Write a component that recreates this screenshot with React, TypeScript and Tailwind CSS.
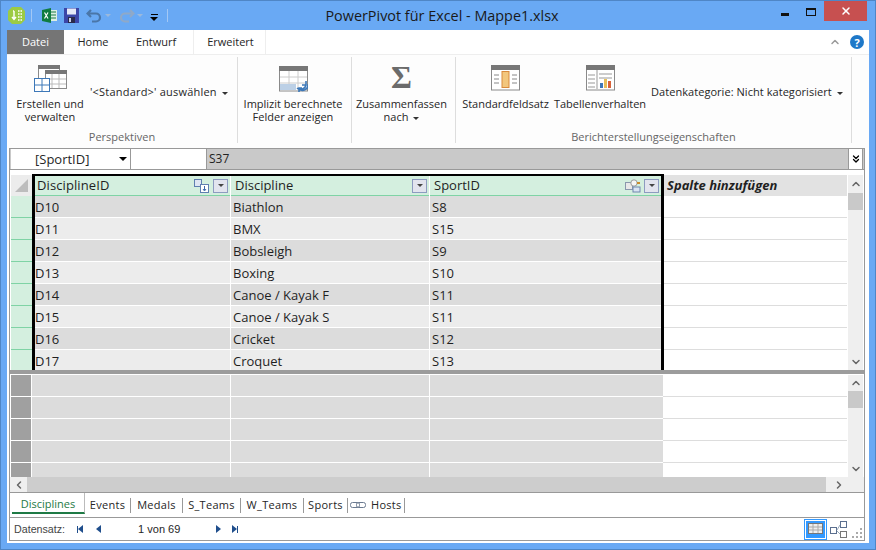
import { ChevronDown, ChevronUp, ChevronLeft, ChevronRight, ChevronsDown, X } from "lucide-react";

const ui = { fontFamily: '"Open Sans", "Noto Sans", sans-serif' };
const arial = { fontFamily: '"Liberation Sans", sans-serif' };

const rows = [
  ["D10", "Biathlon", "S8"],
  ["D11", "BMX", "S15"],
  ["D12", "Bobsleigh", "S9"],
  ["D13", "Boxing", "S10"],
  ["D14", "Canoe / Kayak F", "S11"],
  ["D15", "Canoe / Kayak S", "S11"],
  ["D16", "Cricket", "S12"],
  ["D17", "Croquet", "S13"],
];

const sheets = [
  { name: "Events", width: 46 },
  { name: "Medals", width: 52 },
  { name: "S_Teams", width: 58 },
  { name: "W_Teams", width: 63 },
  { name: "Sports", width: 44 },
];

function Caret() {
  return <span className="ml-[5px] inline-block h-0 w-0 border-x-[3px] border-t-[3px] border-x-transparent border-t-[#333] align-middle" />;
}

function GridIcon({ children }: { children?: React.ReactNode }) {
  return (
    <svg width="29" height="26" viewBox="0 0 29 26">
      <rect x="0.5" y="0.5" width="28" height="24.5" fill="#fff" stroke="#8a8a8a" />
      <rect x="0" y="0" width="29" height="5" fill="#777" />
      {children}
    </svg>
  );
}

function FilterButton() {
  return (
    <span className="flex h-[14px] w-[15px] items-center justify-center border border-[#8d9bc0] bg-[#e2e4ee]">
      <span className="h-0 w-0 border-x-[3px] border-t-[3px] border-x-transparent border-t-[#444]" />
    </span>
  );
}

function KeyIcon() {
  return (
    <svg width="16" height="14" viewBox="0 0 16 14">
      <rect x="0.5" y="0.5" width="7" height="7" fill="#dfe6f3" stroke="#5f7fb0" />
      <rect x="6.5" y="5.5" width="8" height="8" fill="#fff" stroke="#5f7fb0" />
      <path d="M10.5 7v4M9 10l1.5 2 1.5-2" stroke="#3a66a8" fill="none" />
    </svg>
  );
}

function LinkIcon() {
  return (
    <svg width="16" height="14" viewBox="0 0 16 14">
      <rect x="0.5" y="3.5" width="7" height="7" fill="#e8e8e8" stroke="#8a97ac" />
      <circle cx="9" cy="4" r="3.2" fill="#f5f5f5" stroke="#9a9a9a" />
      <rect x="8" y="8" width="7" height="5" fill="#d9e3f2" stroke="#6f87ad" />
      <path d="M12 4h3" stroke="#c98a2e" strokeWidth="2" />
    </svg>
  );
}

function Scrollbar({ top }: { top: number }) {
  return (
    <div className="flex w-[15px] shrink-0 flex-col items-center bg-[#efefef]">
      <div className="flex w-full items-center justify-center" style={{ height: top }}>
        <ChevronUp size={12} strokeWidth={3} className="text-[#666]" />
      </div>
      <div className="h-[17px] w-full bg-[#c9c9c9]" />
      <div className="flex-1" />
      <div className="flex h-[16px] w-full items-center justify-center">
        <ChevronDown size={12} strokeWidth={3} className="text-[#666]" />
      </div>
    </div>
  );
}

export default function App() {
  return (
    <div className="flex h-[550px] w-[876px] flex-col overflow-hidden border border-[#4f86c6] bg-[#69a9f4] text-[#262626]" style={ui}>
      {/* Title bar */}
      <div className="flex h-[29px] shrink-0 items-start">
        <div className="flex w-[188px] items-center pl-[7px] pt-[6px]">
          <svg width="17" height="17" viewBox="0 0 17 17">
            <path d="M4 0h9l4 4v9l-4 4H4L0 13V4z" fill="#9ccb45" />
            <path d="M6 4v8M4 10l2 2.5 2-2.5M6 4h-1" stroke="#fff" strokeWidth="1.4" fill="none" />
            <path d="M10 4h4M10 7h4M10 10h4M10 13h4" stroke="#fff" strokeWidth="1.5" strokeDasharray="1.5 1" />
          </svg>
          <span className="ml-[6px] h-[13px] w-px bg-[#a3c8f5]" />
          <svg className="ml-[10px]" width="15" height="15" viewBox="0 0 15 15">
            <rect x="7" y="2" width="8" height="11" fill="#dcefe3" />
            <path d="M9 4h5M9 7h5M9 10h5" stroke="#1d7a45" />
            <path d="M0 2l9-2v15l-9-2z" fill="#107c41" />
            <path d="M2.5 4.5l3.5 6M6 4.5l-3.5 6" stroke="#fff" strokeWidth="1.2" />
          </svg>
          <svg className="ml-[7px]" width="15" height="15" viewBox="0 0 15 15">
            <rect width="15" height="15" fill="#3b46a8" />
            <rect x="3" y="0.5" width="9" height="6" fill="#e5e9f8" />
            <rect x="4" y="9" width="7" height="6" fill="#2a2a4a" />
            <rect x="5" y="10" width="2" height="4" fill="#c9d0e8" />
          </svg>
          <svg className="ml-[7px]" width="17" height="14" viewBox="0 0 17 14">
            <path d="M5 1L1.5 4.5 5 8M2 4.5h8a4 4 0 0 1 0 8H6" stroke="#4a76a8" strokeWidth="2.2" fill="none" />
          </svg>
          <span className="ml-[2px] h-0 w-0 border-x-[3px] border-t-[3px] border-x-transparent border-t-[#9bb9dc]" />
          <svg className="ml-[7px]" width="17" height="14" viewBox="0 0 17 14">
            <path d="M12 1l3.5 3.5L12 8M15 4.5H7a4 4 0 0 0 0 8h4" stroke="#8fa9c8" strokeWidth="2.2" fill="none" />
          </svg>
          <span className="ml-[2px] h-0 w-0 border-x-[3px] border-t-[3px] border-x-transparent border-t-[#9bb9dc]" />
          <span className="ml-[7px] flex flex-col items-center gap-[2px] pt-[3px]">
            <span className="h-px w-[7px] bg-black" />
            <span className="h-0 w-0 border-x-[4px] border-t-[4px] border-x-transparent border-t-black" />
          </span>
          <span className="ml-[9px] h-[13px] w-px bg-[#a3c8f5]" />
        </div>
        <div className="flex-1 pt-[4px] text-center text-[14.4px] leading-[22px] text-[#1a1a1a]">PowerPivot für Excel - Mappe1.xlsx</div>
        <div className="flex w-[180px] items-start justify-end pr-[8px]">
          <div className="flex h-[20px] w-[27px] items-end justify-center pb-[5px]"><span className="h-[3px] w-[8px] bg-[#111]" /></div>
          <div className="flex h-[20px] w-[26px] items-center justify-center pt-[2px]"><span className="h-[8px] w-[10px] border border-t-2 border-[#111]" /></div>
          <div className="flex h-[20px] w-[43px] items-center justify-center bg-[#c75050]"><X size={12} strokeWidth={3} className="text-white" /></div>
        </div>
      </div>

      {/* Window body */}
      <div className="mx-[6px] mb-[6px] flex min-h-0 flex-1 flex-col bg-white">
        {/* Ribbon tabs */}
        <div className="flex h-[24px] shrink-0 items-stretch text-[11px]">
          <div className="flex w-[57px] items-center justify-center bg-[#757575] text-white">Datei</div>
          <div className="flex w-[58px] items-center justify-center">Home</div>
          <div className="flex w-[71px] items-center justify-center pr-[3px]">Entwurf</div>
          <div className="flex w-[73px] items-center justify-center border-x border-[#eee] pl-[2px]">Erweitert</div>
          <div className="flex flex-1 items-center justify-end gap-[9px] pr-[5px]">
            <ChevronUp size={12} strokeWidth={3} className="text-[#9a9a9a]" />
            <span className="flex h-[14px] w-[14px] items-center justify-center rounded-full bg-[#1e78c8] text-[11px] font-bold leading-none text-white">?</span>
          </div>
        </div>

        {/* Ribbon */}
        <div className="flex h-[94px] shrink-0 border-t border-[#eee] bg-[#fdfdfd] pb-[5px] pt-[2px] text-[11px] leading-[13px]">
          <div className="flex w-[231px] flex-col border-r border-[#ddd]">
            <div className="flex flex-1">
              <div className="flex w-[83px] flex-col items-center pl-[3px] pt-[8px]">
                <svg width="33" height="28" viewBox="0 0 33 28">
                  <rect x="4.5" y="0.5" width="21" height="16" fill="#fff" stroke="#8a8a8a" />
                  <rect x="4" y="0" width="22" height="4" fill="#777" />
                  <rect x="11.5" y="5.5" width="21" height="18" fill="#fff" stroke="#8a8a8a" />
                  <rect x="11" y="5" width="22" height="4" fill="#777" />
                  <path d="M18 9v14M25 9v14M12 14h20M12 19h20" stroke="#bbb" />
                  <rect x="0.5" y="13.5" width="15" height="13" fill="#fff" stroke="#3d78b8" />
                  <path d="M8 14v12M1 20h14" stroke="#3d78b8" />
                </svg>
                <div className="mt-[4px] whitespace-nowrap text-center">Erstellen und<br />verwalten</div>
              </div>
              <div className="whitespace-nowrap pt-[28px] tracking-[0.2px]">'&lt;Standard&gt;' auswählen<Caret /></div>
            </div>
            <div className="text-center text-[#666]">Perspektiven</div>
          </div>

          <div className="flex w-[114px] flex-col items-center border-r border-[#ddd] pr-[3px] pt-[9px]">
            <GridIcon>
              <path d="M10 5v19M19 5v19M1 11h27M1 17h27" stroke="#ccc" />
              <rect x="1" y="18" width="16" height="6" fill="#bcd0e6" />
              <path d="M18 22a5.5 5.5 0 0 0 9-3M27 15v4h-4M29 18a5.5 5.5 0 0 1-9 5M20 26v-4h3" stroke="#3d78b8" strokeWidth="1.6" fill="none" />
            </GridIcon>
            <div className="mt-[5px] whitespace-nowrap text-center">Implizit berechnete<br />Felder anzeigen</div>
          </div>

          <div className="flex w-[104px] flex-col items-center border-r border-[#ddd] pr-[4px] pt-[4px]">
            <div className="h-[32px] text-[32px] font-bold leading-[32px] text-[#6b6b6b]" style={{ fontFamily: '"Liberation Serif", serif' }}>Σ</div>
            <div className="mt-[4px] whitespace-nowrap text-center">Zusammenfassen<br />nach<Caret /></div>
          </div>

          <div className="mr-[17px] flex flex-1 flex-col border-r border-[#ddd]">
            <div className="flex flex-1">
              <div className="flex w-[99px] flex-col items-center pt-[8px]">
                <GridIcon>
                  <path d="M3 10h5M3 14h5M3 18h5M21 10h5M21 14h5M21 18h5" stroke="#888" />
                  <rect x="11" y="6.5" width="7" height="16" fill="#f2c67d" stroke="#d98a3c" />
                </GridIcon>
                <div className="mt-[6px] whitespace-nowrap">Standardfeldsatz</div>
              </div>
              <div className="flex w-[90px] flex-col items-center pt-[8px]">
                <GridIcon>
                  <path d="M11 5v19M2 10h7M2 14h7M2 18h7M2 22h7M13 9h13M13 13h13" stroke="#999" />
                  <rect x="14" y="18" width="3" height="5" fill="#3d78b8" />
                  <rect x="18" y="14" width="3" height="9" fill="#e8bf5a" />
                  <rect x="22" y="16" width="3" height="7" fill="#d9623a" />
                </GridIcon>
                <div className="mt-[6px] whitespace-nowrap">Tabellenverhalten</div>
              </div>
              <div className="whitespace-nowrap pl-[6px] pt-[28px] tracking-[0.05px]">Datenkategorie: Nicht kategorisiert<Caret /></div>
            </div>
            <div className="text-center text-[#666]">Berichterstellungseigenschaften</div>
          </div>
        </div>

        {/* Work area */}
        <div className="ml-[2px] mr-[4px] flex flex-1 flex-col border-x border-[#999]">
          {/* Formula bar */}
          <div className="flex h-[22px] shrink-0 border-y border-[#999] bg-[#c9c9c9] pl-px pr-px text-[12px] leading-[20px]">
            <div className="flex w-[120px] items-center border-r border-[#999] bg-white pl-[24px] text-[13px]">
              <span className="flex-1">[SportID]</span>
              <span className="mr-[3px] h-0 w-0 border-x-[4px] border-t-[4px] border-x-transparent border-t-black" />
            </div>
            <div className="w-[76px] border-r border-[#999] bg-white" />
            <div className="flex-1 pl-[2px] text-[#222]">S37</div>
            <div className="flex w-[15px] items-center justify-center border-x border-[#999] bg-white"><ChevronsDown size={12} strokeWidth={2.6} className="text-black" /></div>
          </div>

          {/* Upper pane */}
          <div className="flex h-[200px] shrink-0 overflow-hidden pl-px pr-px text-[13px] text-[#1f1f1f]">
            <div className="w-[21px] shrink-0 pt-[5px]">
              <div className="flex h-[21px] items-center justify-center bg-[#ececec]">
                <span className="h-0 w-0 border-b-[13px] border-l-[13px] border-b-[#bdbdbd] border-l-transparent" />
              </div>
              {rows.map((r) => (
                <div key={r[0]} className="h-[22px] border-b border-[#7fd3a5] bg-[#d4efdf]" />
              ))}
            </div>
            <div className="mt-[4px] flex w-[632px] shrink-0 flex-col overflow-hidden border-x-[3px] border-t-[2px] border-black">
              <div className="grid h-[20px] shrink-0 grid-cols-[196px_199px_1fr] border-b border-[#7fd3a5] bg-[#d4efdf]">
                <div className="flex items-center border-r border-white px-[2px]">
                  <span className="flex-1 tracking-[0.1px]">DisciplineID</span>
                  <KeyIcon />
                  <span className="ml-[3px]"><FilterButton /></span>
                </div>
                <div className="flex items-center border-r border-white pl-[4px] pr-[2px]">
                  <span className="flex-1">Discipline</span>
                  <FilterButton />
                </div>
                <div className="flex items-center pl-[4px] pr-[2px]">
                  <span className="flex-1">SportID</span>
                  <LinkIcon />
                  <span className="ml-[3px]"><FilterButton /></span>
                </div>
              </div>
              {rows.map((r, i) => (
                <div key={r[0]} className={`grid h-[22px] shrink-0 grid-cols-[196px_199px_1fr] border-b border-white ${i % 2 === 0 ? "bg-[#dcdcdc]" : "bg-[#ececec]"}`}>
                  <div className="h-full border-r border-white leading-[23px]">{r[0]}</div>
                  <div className="h-full border-r border-white pl-[2px] leading-[23px]">{r[1]}</div>
                  <div className="h-full pl-[2px] leading-[23px]">{r[2]}</div>
                </div>
              ))}
            </div>
            <div className="flex-1 pr-px pt-[5px]">
              <div className="h-[21px] bg-[#e2e2e2] pl-[3px] font-bold italic leading-[21px]">Spalte hinzufügen</div>
              {rows.map((r) => (
                <div key={r[0]} className="h-[22px] border-b border-[#ddd] bg-white" />
              ))}
            </div>
            <div className="flex pt-[5px]"><Scrollbar top={18} /></div>
          </div>

          {/* Splitter */}
          <div className="h-[4px] shrink-0 bg-[#9c9c9c]" />

          {/* Lower pane */}
          <div className="flex h-[103px] shrink-0 overflow-hidden pl-px pr-px pt-px">
            <div className="w-[21px] shrink-0">
              {[0, 1, 2, 3, 4].map((i) => (
                <div key={i} className="h-[22px] border-b border-r border-white bg-[#a0a0a0]" />
              ))}
            </div>
            <div className="w-[631px] shrink-0">
              {[0, 1, 2, 3, 4].map((i) => (
                <div key={i} className="grid h-[22px] grid-cols-[199px_199px_1fr] border-b border-white bg-[#dcdcdc]">
                  <div className="border-r border-white" />
                  <div className="border-r border-white" />
                  <div />
                </div>
              ))}
            </div>
            <div className="flex-1 pr-px">
              {[0, 1, 2, 3, 4].map((i) => (
                <div key={i} className="h-[22px] border-b border-[#ddd]" />
              ))}
            </div>
            <Scrollbar top={16} />
          </div>

          {/* Horizontal scrollbar */}
          <div className="flex h-[16px] shrink-0 items-center border-b border-[#999] bg-[#efefef]">
            <div className="flex w-[17px] justify-center"><ChevronLeft size={12} strokeWidth={3} className="text-[#666]" /></div>
            <div className="h-full w-[799px] bg-[#cdcdcd]" />
            <ChevronRight size={12} strokeWidth={3} className="ml-[7px] text-[#666]" />
          </div>

          {/* Sheet tabs */}
          <div className="flex h-[25px] shrink-0 items-center border-b border-[#999] pl-[2px] text-[11px] tracking-[0.3px]">
            <div className="flex h-[21px] w-[73px] items-center justify-center self-start border-b-2 border-r border-b-[#1e7a45] border-r-[#bbb] pt-[3px] font-medium tracking-normal text-[#1e7a45]">Disciplines</div>
            {sheets.map((s) => (
              <div key={s.name} className="flex h-[15px] items-center justify-center border-r border-[#999]" style={{ width: s.width }}>{s.name}</div>
            ))}
            <div className="flex h-[15px] w-[57px] items-center border-r border-[#999] pl-[2px]">
              <svg width="16" height="8" viewBox="0 0 16 8" className="mr-[5px]">
                <rect x="0.5" y="1.5" width="9" height="5" rx="2" fill="none" stroke="#6b7a90" />
                <rect x="6.5" y="1.5" width="9" height="5" rx="2" fill="none" stroke="#6b7a90" />
              </svg>
              Hosts
            </div>
          </div>

          {/* Status bar */}
          <div className="flex h-[23px] shrink-0 items-center border-b border-[#999] pl-[4px] text-[11px]">
            <span className="text-[10.7px] text-[#444]" style={arial}>Datensatz:</span>
            <span className="ml-[12px] flex items-center">
              <span className="h-[7px] w-px bg-[#1f4e8c]" />
              <span className="h-0 w-0 border-y-[4px] border-r-[5px] border-y-transparent border-r-[#1f4e8c]" />
            </span>
            <span className="ml-[13px] h-0 w-0 border-y-[4px] border-r-[5px] border-y-transparent border-r-[#1f4e8c]" />
            <span className="ml-[37px] w-[78px] text-[11px]" style={arial}>1 von 69</span>
            <span className="h-0 w-0 border-y-[4px] border-l-[5px] border-y-transparent border-l-[#1f4e8c]" />
            <span className="ml-[11px] flex items-center">
              <span className="h-0 w-0 border-y-[4px] border-l-[5px] border-y-transparent border-l-[#1f4e8c]" />
              <span className="h-[7px] w-px bg-[#1f4e8c]" />
            </span>
            <div className="flex-1" />
            <div className="flex h-[21px] w-[23px] items-center justify-center self-end border border-[#3399ff] bg-[#3399ff] shadow-[inset_0_0_0_1px_#fff]">
              <svg width="15" height="13" viewBox="0 0 15 13">
                <rect x="0.5" y="0.5" width="14" height="10" fill="#eee" stroke="#777" />
                <path d="M5 1v9M10 1v9M1 4h13M1 7h13" stroke="#aaa" />
              </svg>
            </div>
            <svg className="ml-[3px]" width="17" height="17" viewBox="0 0 17 17">
              <rect x="0.5" y="6.5" width="6" height="6" fill="#fff" stroke="#5b6f8f" />
              <rect x="10.5" y="0.5" width="6" height="6" fill="#fff" stroke="#5b6f8f" />
              <rect x="10.5" y="10.5" width="6" height="6" fill="#fff" stroke="#777" />
              <path d="M7 9l3-5M7 10l3 3" stroke="#9ab" />
            </svg>
            <svg className="ml-[5px] mr-[1px] self-end" width="11" height="12" viewBox="0 0 11 12" fill="#aaa">
              <rect x="8" y="0" width="2" height="2" /><rect x="4" y="4" width="2" height="2" /><rect x="8" y="4" width="2" height="2" />
              <rect x="0" y="8" width="2" height="2" /><rect x="4" y="8" width="2" height="2" /><rect x="8" y="8" width="2" height="2" />
            </svg>
          </div>
        </div>
        <div className="h-[2px] shrink-0" />
      </div>
    </div>
  );
}
